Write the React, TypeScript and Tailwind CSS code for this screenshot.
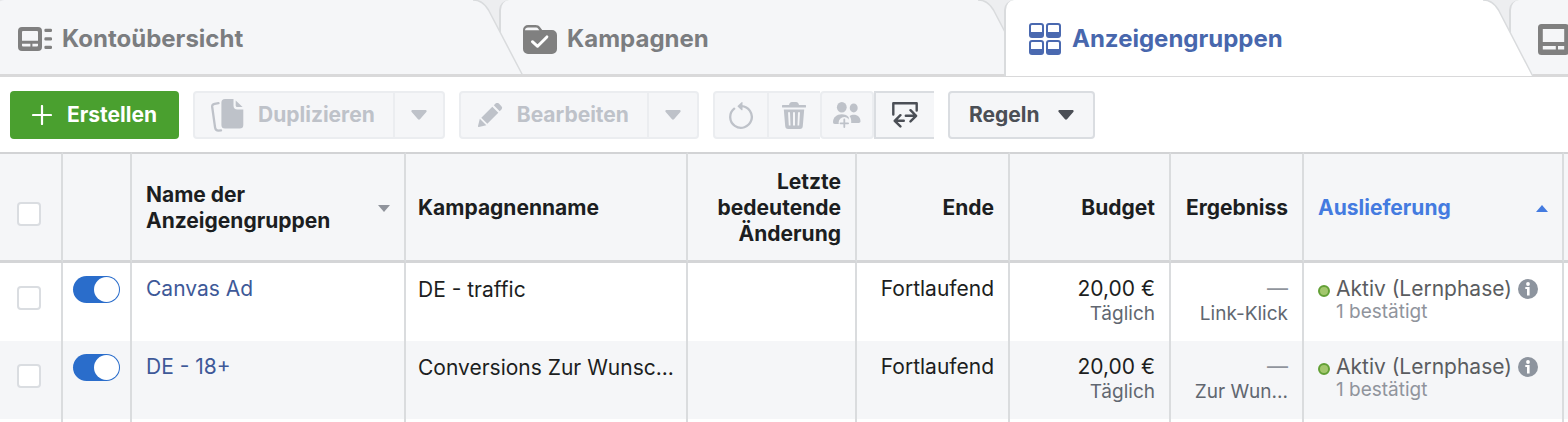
import { useState, type ReactNode } from "react";
import { clsx } from "clsx";

type TabId = "overview" | "campaigns" | "adsets" | "ads";

type AdSet = {
  id: string;
  name: string;
  campaign: string;
  end: string;
  budget: string;
  budgetType: string;
  result: string;
  resultType: string;
  delivery: string;
  deliveryNote: string;
};

const adSets: AdSet[] = [
  {
    id: "1",
    name: "Canvas Ad",
    campaign: "DE - traffic",
    end: "Fortlaufend",
    budget: "20,00 €",
    budgetType: "Täglich",
    result: "—",
    resultType: "Link-Klick",
    delivery: "Aktiv (Lernphase)",
    deliveryNote: "1 bestätigt",
  },
  {
    id: "2",
    name: "DE - 18+",
    campaign: "Conversions Zur Wunsc...",
    end: "Fortlaufend",
    budget: "20,00 €",
    budgetType: "Täglich",
    result: "—",
    resultType: "Zur Wun...",
    delivery: "Aktiv (Lernphase)",
    deliveryNote: "1 bestätigt",
  },
];

const OverviewIcon = () => (
  <svg width="34" height="24" viewBox="0 0 34 24" fill="currentColor" aria-hidden="true">
    <path
      fillRule="evenodd"
      d="M4 0h16a4 4 0 0 1 4 4v16a4 4 0 0 1-4 4H4a4 4 0 0 1-4-4V4a4 4 0 0 1 4-4ZM5 4a1 1 0 0 0-1 1v8.7h16V5a1 1 0 0 0-1-1ZM4 16.8v1.6a1 1 0 0 0 1 1h7.4v-2.6ZM14.4 16.8v2.6H19a1 1 0 0 0 1-1v-1.6Z"
    />
    <rect x="26.4" y="1.8" width="7.6" height="3.2" rx="1.2" />
    <rect x="26.4" y="10.3" width="7.6" height="3.2" rx="1.2" />
    <rect x="26.4" y="18.8" width="7.6" height="3.2" rx="1.2" />
  </svg>
);

const FolderIcon = () => (
  <svg width="34" height="29" viewBox="0 0 34 29" aria-hidden="true">
    <path
      fill="currentColor"
      d="M0 5a5 5 0 0 1 5-5h7.5c2.2 0 3.5.8 4.6 2.3L19.2 5H29a5 5 0 0 1 5 5v14a5 5 0 0 1-5 5H5a5 5 0 0 1-5-5Z"
    />
    <path fill="#f5f6f8" d="M2 5.2c0-1.6 1.3-2.7 3-2.7h7.5c1.3 0 2.2.5 2.9 1.4l1 1.3Z" />
    <path
      d="m9.4 16.7 5.2 4.6 9.3-9.4"
      fill="none"
      stroke="#fff"
      strokeWidth="2.9"
      strokeLinecap="round"
      strokeLinejoin="round"
    />
  </svg>
);

const gridCells = [
  [1, 0],
  [18, 0],
  [1, 17],
  [18, 17],
];

const GridIcon = () => (
  <svg width="34" height="32" viewBox="0 0 34 32" aria-hidden="true">
    {gridCells.map(([x, y]) => (
      <g key={`${x}-${y}`}>
        <rect x={x} y={y} width="15" height="15" rx="3" fill="currentColor" />
        <path d={`M${x + 2} ${y + 3}a1 1 0 0 1 1-1h9a1 1 0 0 1 1 1v6h-11Z`} fill="#fff" />
      </g>
    ))}
  </svg>
);

const AdIcon = () => (
  <svg width="36" height="31" viewBox="-5 0 36 31" fill="currentColor" aria-hidden="true">
    <path
      fillRule="evenodd"
      d="M3.5 0h24A3.5 3.5 0 0 1 31 3.5v24a3.5 3.5 0 0 1-3.5 3.5h-24A3.5 3.5 0 0 1 0 27.5v-24A3.5 3.5 0 0 1 3.5 0ZM4.8 5v13h21.4V5ZM4.8 22v3.4h13V22ZM20 22v3.4h6.2V22Z"
    />
  </svg>
);

const PlusIcon = () => (
  <svg width="20" height="20" viewBox="0 0 20 20" aria-hidden="true">
    <path d="M10 1v18M1 10h18" stroke="currentColor" strokeWidth="2.2" strokeLinecap="round" />
  </svg>
);

const DuplicateIcon = () => (
  <svg width="33" height="33" viewBox="0 0 33 33" aria-hidden="true">
    <path
      d="M7.5 4.2 3.6 4.9C1.9 5.2 1 6.3 1.2 8l2.9 20.6c.3 2 1.5 3 3.3 3l2.6-.3"
      fill="none"
      stroke="currentColor"
      strokeWidth="2.3"
      strokeLinecap="round"
    />
    <path
      fill="currentColor"
      d="M14 0h8.5v6.5a4 4 0 0 0 4 4H32.3V26a3.6 3.6 0 0 1-3.6 3.6H14A3.6 3.6 0 0 1 10.4 26V3.6A3.6 3.6 0 0 1 14 0Z"
    />
    <path fill="currentColor" d="M24.7 1.6 31.6 8h-5.4a1.5 1.5 0 0 1-1.5-1.5Z" />
  </svg>
);

const PencilIcon = () => (
  <svg width="26" height="24" viewBox="-1 0 26 24" fill="currentColor" aria-hidden="true">
    <path d="M1.8 15.7 8.3 22.2.9 24a.8.8 0 0 1-.9-.9Z" />
    <path d="M14.3 3.7 20.3 9.7 9.3 20.7 3.3 14.7Z" />
    <path d="M15.8 2.3 17.3.8a2.7 2.7 0 0 1 3.8 0l2.1 2.1a2.7 2.7 0 0 1 0 3.8L21.7 8.2Z" />
  </svg>
);

const Caret = () => (
  <svg width="16" height="10" viewBox="0 0 16 10" fill="currentColor" aria-hidden="true">
    <path d="M1.5 0h13c1 0 1.5 1.2.8 2L9.2 9a1.6 1.6 0 0 1-2.4 0L.7 2C0 1.2.5 0 1.5 0Z" />
  </svg>
);

const ResetIcon = () => (
  <svg width="24" height="27" viewBox="0 0 24 27" aria-hidden="true">
    <path
      d="M12.5 4.2A10.8 10.8 0 1 1 5.2 6.6"
      fill="none"
      stroke="currentColor"
      strokeWidth="2.3"
      strokeLinecap="round"
    />
    <path fill="currentColor" d="M13.5.6v7.2c0 .5-.5.7-.9.4L8.8 4.7a.7.7 0 0 1 0-1L12.6.2c.4-.3.9-.1.9.4Z" />
  </svg>
);

const TrashIcon = () => (
  <svg width="24" height="27" viewBox="0 0 24 27" fill="currentColor" aria-hidden="true">
    <path d="M7 3c.3-1.8 1.5-3 3-3h4c1.5 0 2.7 1.2 3 3h6a1 1 0 0 1 0 2.6H1A1 1 0 0 1 1 3Z" />
    <path
      fillRule="evenodd"
      d="M1.8 7.5h20.4L20.8 24a3 3 0 0 1-3 2.9H6.2a3 3 0 0 1-3-2.9ZM6 10.2l.8 13.4h1.7L8 10.2ZM11 10.2v13.4h2V10.2ZM16 10.2l-.5 13.4h1.7L18 10.2Z"
    />
  </svg>
);

const PeopleIcon = () => (
  <svg width="28" height="26" viewBox="0 0 28 26" aria-hidden="true">
    <ellipse cx="8.8" cy="5.2" rx="4.9" ry="5.2" fill="currentColor" />
    <ellipse cx="20.7" cy="5.9" rx="4" ry="4.5" fill="currentColor" />
    <path
      fill="currentColor"
      d="M0 20c0-4.400 3.700-7.700 8.800-7.700 3 0 5.500 1.200 7 3.100V22H1.700C.6 22 0 21.200 0 20Z"
    />
    <path
      fill="currentColor"
      d="M16.600 14.100c1.200-.9 2.600-1.300 4.200-1.300 3.800 0 6.700 2.700 6.700 6.400 0 1.100-.7 1.700-1.800 1.700h-7.500c.2-2.700-.3-4.900-1.600-6.800Z"
    />
    <circle cx="11.3" cy="20.800" r="5.700" fill="#f5f6f8" />
    <path d="M11.3 17.500v7.600M7.500 21.300h7.600" stroke="currentColor" strokeWidth="1.8" strokeLinecap="round" />
  </svg>
);

const SwapIcon = () => (
  <svg
    width="26"
    height="26"
    viewBox="0 0 26 26"
    fill="none"
    stroke="currentColor"
    strokeWidth="2.4"
    strokeLinecap="round"
    strokeLinejoin="round"
    aria-hidden="true"
  >
    <path d="M1.3 12.5V1.3H24.7V8.5" />
    <path d="M13.8 13.8H24M18.5 8.2l5.600 5.600-5.600 5.600M11.800 18.800H2.800M8.400 13.200l-5.700 5.600 5.700 5.600" />
  </svg>
);

const InfoIcon = () => (
  <svg width="20" height="20" viewBox="0 0 20 20" aria-hidden="true">
    <circle cx="10" cy="10" r="10" fill="#8d949e" />
    <circle cx="10" cy="5" r="1.9" fill="#fff" />
    <path d="M7.3 8h4.300v8.500H9V10H7.300Z" fill="#fff" />
  </svg>
);

const SortIcon = ({ up = false }: { up?: boolean }) => (
  <svg width="12" height="7" viewBox="0 0 12 7" fill="currentColor" aria-hidden="true">
    <path d={up ? "M0 7 6 0l6 7Z" : "M0 0h12L6 7Z"} />
  </svg>
);

const tabs: Array<{ id: TabId; label?: string; icon: ReactNode; layer: string }> = [
  { id: "overview", label: "Kontoübersicht", icon: <OverviewIcon />, layer: "z-10" },
  { id: "campaigns", label: "Kampagnen", icon: <FolderIcon />, layer: "z-0" },
  { id: "adsets", label: "Anzeigengruppen", icon: <GridIcon />, layer: "z-20" },
  { id: "ads", icon: <AdIcon />, layer: "z-0" },
];

/* Slanted right edge of a tab, hangs over the next one. */
const TabEdge = ({ active }: { active: boolean }) => (
  <svg width="55" height="77" viewBox="0 0 55 77" className="shrink-0" aria-hidden="true">
    <path d="M0 0h4c7 0 12 4 15.5 10L53.5 74v3H0Z" fill={active ? "#ffffff" : "#f5f6f8"} />
    <path
      d={active ? "M4 0c7 0 12 4 15.5 10L54 76.5" : "M4 0c7 0 12 4 15.5 10L53.5 75"}
      fill="none"
      stroke="#d9dbdd"
      strokeWidth="1.5"
    />
    <rect y={active ? 76 : 74} width="55" height={active ? 1 : 3} fill="#d9d9da" />
  </svg>
);

const splitButton =
  "flex h-12 items-center border-2 border-[#ebedf0] bg-[#f5f6f8] text-[21px] font-bold text-[#bec2c9]";

const ToolbarSplit = ({ label, icon }: { label: string; icon: ReactNode }) => (
  <div className="flex">
    <button
      type="button"
      disabled
      className={clsx(splitButton, "gap-[14px] rounded-l pr-[18px] pl-4")}
    >
      {icon}
      {label}
    </button>
    <button
      type="button"
      disabled
      aria-label={`${label}: Optionen`}
      className={clsx(splitButton, "w-[50px] justify-center rounded-r border-l-0")}
    >
      <Caret />
    </button>
  </div>
);

const Checkbox = ({ label }: { label: string }) => (
  <input
    type="checkbox"
    aria-label={label}
    className="mx-auto block size-6 appearance-none rounded border-2 border-[#dadde1] bg-white checked:bg-[#2a6dcb]"
  />
);

const Toggle = ({ label }: { label: string }) => {
  const [on, setOn] = useState(true);
  return (
    <input
      type="checkbox"
      role="switch"
      aria-label={label}
      checked={on}
      onChange={() => setOn(!on)}
      className="mx-auto flex h-[27px] w-[47px] appearance-none rounded-full bg-[#bec2c9] p-px before:size-[25px] before:rounded-full before:bg-white checked:justify-end checked:bg-[#2a6dcb]"
    />
  );
};

const th = "border-r-2 border-[#dadcde] px-[14px] pt-0.5 align-middle";
const td = "border-r-2 border-[#dadcde] px-[14px] pt-[13px] align-top";
const subText = "text-[19px] leading-6 whitespace-nowrap text-[#616770]";

export default function App() {
  const [activeTab, setActiveTab] = useState<TabId>("adsets");

  return (
    <div className="flex h-screen flex-col overflow-hidden bg-white font-['Inter',sans-serif] text-[21px] leading-[26px] text-[#1c1e21]">
      <nav className="flex shrink-0 overflow-hidden bg-[#edeef0]" role="tablist">
        <div className="-ml-[6px] flex">
          {tabs.map((tab) => {
            const active = tab.id === activeTab;
            return (
              <button
                key={tab.id}
                type="button"
                role="tab"
                aria-selected={active}
                aria-label={tab.label ?? "Werbeanzeigen"}
                onClick={() => setActiveTab(tab.id)}
                className={clsx(
                  "relative -mr-[25px] flex h-[77px] w-[530px] shrink-0 text-2xl font-bold",
                  tab.layer,
                  active ? "text-[#4867ad]" : "text-[#7b7d80]",
                )}
              >
                <span
                  className={clsx(
                    "flex h-full flex-1 items-center gap-[10px] rounded-tl-[10px] border-l-2 border-l-[#d9dbdd] pl-[22px]",
                    active
                      ? "border-b border-b-[#d9d9da] bg-white pt-[2px]"
                      : "border-b-[3px] border-b-[#d9d9da] bg-[#f5f6f8] pt-1",
                  )}
                >
                  <span className={active ? "text-[#4a69b0]" : "text-[#808080]"}>{tab.icon}</span>
                  {tab.label}
                </span>
                <TabEdge active={active} />
              </button>
            );
          })}
        </div>
      </nav>

      <div className="flex shrink-0 gap-[14px] px-[10px] pt-[14px] pb-[13px]">
        <button
          type="button"
          className="flex h-12 items-center gap-[15px] rounded bg-[#4aa02f] px-[22px] font-bold text-white"
        >
          <PlusIcon />
          Erstellen
        </button>
        <ToolbarSplit label="Duplizieren" icon={<DuplicateIcon />} />
        <ToolbarSplit label="Bearbeiten" icon={<PencilIcon />} />
        <div className="flex">
          <button
            type="button"
            disabled
            aria-label="Zurücksetzen"
            className={clsx(splitButton, "w-14 justify-center rounded-l")}
          >
            <ResetIcon />
          </button>
          <button
            type="button"
            disabled
            aria-label="Löschen"
            className={clsx(splitButton, "w-[51px] justify-center border-x-0")}
          >
            <TrashIcon />
          </button>
          <button
            type="button"
            disabled
            aria-label="Zielgruppe hinzufügen"
            className={clsx(splitButton, "w-[54px] justify-center rounded")}
          >
            <PeopleIcon />
          </button>
          <button
            type="button"
            aria-label="Exportieren und importieren"
            className="flex h-12 w-[60px] items-center justify-center border-2 border-r-0 border-[#dadde1] bg-[#f5f6f8] text-[#4b4f56]"
          >
            <SwapIcon />
          </button>
        </div>
        <button
          type="button"
          className="flex h-12 items-center gap-[18px] rounded border-2 border-[#dadde1] bg-[#f5f6f8] px-[19px] font-bold text-[#4b4f56]"
        >
          Regeln
          <Caret />
        </button>
      </div>

      <table className="w-full shrink-0 table-fixed border-separate border-spacing-0">
        <colgroup>
          <col className="w-[63px]" />
          <col className="w-[69px]" />
          <col className="w-[274px]" />
          <col className="w-[282px]" />
          <col className="w-[169px]" />
          <col className="w-[153px]" />
          <col className="w-[161px]" />
          <col className="w-[133px]" />
          <col className="w-[260px]" />
          <col />
        </colgroup>
        <thead>
          <tr className="h-[111px] bg-[#f5f6f8] text-left font-bold *:border-t-2 *:border-b-[3px] *:border-t-[#d2d3d5] *:border-b-[#d4d5d7]">
            <th className="border-r-2 border-[#dadcde] pt-[14px] pr-1 align-middle">
              <Checkbox label="Alle auswählen" />
            </th>
            <th className={th} />
            <th className={th}>
              <div className="flex items-center justify-between">
                <span>
                  Name der
                  <br />
                  Anzeigengruppen
                </span>
                <span className="text-[#90949c]">
                  <SortIcon />
                </span>
              </div>
            </th>
            <th className="border-r-2 border-[#dadcde] px-3 pt-0.5 align-middle">
              Kampagnenname
            </th>
            <th className={clsx(th, "text-right")}>Letzte bedeutende Änderung</th>
            <th className={clsx(th, "text-right")}>Ende</th>
            <th className={clsx(th, "text-right")}>Budget</th>
            <th className={clsx(th, "text-right")}>Ergebniss</th>
            <th className={th}>
              <div className="flex items-center justify-between text-[#447be0]">
                Auslieferung
                <SortIcon up />
              </div>
            </th>
            <th />
          </tr>
        </thead>
        <tbody>
          {adSets.map((row) => (
            <tr key={row.id} className="h-[78px] even:bg-[#f5f6f8]">
              <td className="border-r-2 border-[#dadcde] pt-[23px] pr-1 align-top">
                <Checkbox label={`${row.name} auswählen`} />
              </td>
              <td className="border-r-2 border-[#dadcde] pt-[13px] align-top">
                <Toggle label={`${row.name} aktiv`} />
              </td>
              <td className={td}>
                <a href="#" className="text-[#3e5998]">
                  {row.name}
                </a>
              </td>
              <td className="border-r-2 border-[#dadcde] px-3 pt-[14px] align-top whitespace-nowrap">
                {row.campaign}
              </td>
              <td className={td} />
              <td className={clsx(td, "text-right")}>{row.end}</td>
              <td className={clsx(td, "text-right")}>
                {row.budget}
                <div className={subText}>{row.budgetType}</div>
              </td>
              <td className={clsx(td, "text-right")}>
                <div className="text-[#90949c]">{row.result}</div>
                <div className={subText}>{row.resultType}</div>
              </td>
              <td className={td}>
                <div className="flex items-center whitespace-nowrap text-[#5a5c60]">
                  <span className="mt-1 mr-[6px] size-3 shrink-0 rounded-full border-2 border-[#63a036] bg-[#a3c76d]" />
                  {row.delivery}
                  <button type="button" aria-label="Info zur Auslieferung" className="ml-[6px]">
                    <InfoIcon />
                  </button>
                </div>
                <div className="pl-[18px] text-[19px] leading-5 text-[#90949c]">
                  {row.deliveryNote}
                </div>
              </td>
              <td />
            </tr>
          ))}
          <tr className="h-[78px]">
            {Array.from({ length: 9 }, (_, i) => (
              <td key={i} className={td} />
            ))}
            <td />
          </tr>
        </tbody>
      </table>
    </div>
  );
}
